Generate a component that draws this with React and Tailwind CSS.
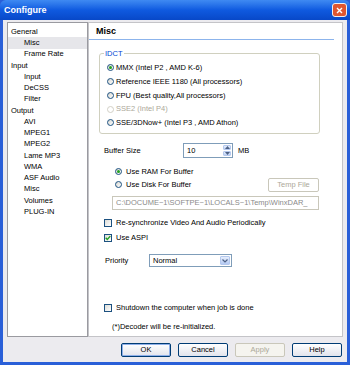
import React from 'react';

const Radio = ({ checked, disabled }) => (
  <span className={`w-[7px] h-[7px] rounded-full border shrink-0 flex items-center justify-center ${disabled ? 'border-[#d2d0c6] bg-white' : 'border-[#1c5180] bg-gradient-to-br from-[#d6d6d0] to-white'}`}>
    {checked && <span className="w-[3px] h-[3px] rounded-full bg-[#21a121]" />}
  </span>
);

const Check = ({ checked }) => (
  <span className="w-[8px] h-[8px] border border-[#1c5180] bg-gradient-to-br from-[#dcdcd7] to-white flex items-center justify-center shrink-0">
    {checked && (
      <svg width="6" height="6" viewBox="0 0 6 6">
        <path d="M0.7 2.8 L2.3 4.5 L5.3 1.1" stroke="#21a121" strokeWidth="1.4" fill="none" />
      </svg>
    )}
  </span>
);

const Btn = ({ children, disabled, def }) => (
  <button
    className={`w-[50px] h-[14px] rounded-[2px] border text-[7.5px] leading-none flex items-center justify-center ${
      disabled
        ? 'border-[#c9c7ba] text-[#aca899] bg-[#f5f4ef]'
        : 'border-[#003c74] text-black bg-gradient-to-b from-white to-[#e2e4ec]'
    } ${def ? 'shadow-[inset_0_0_0_1px_#8fb0ea]' : ''}`}
  >
    {children}
  </button>
);

const tree = [
  ['General', 0],
  ['Misc', 1, true],
  ['Frame Rate', 1],
  ['Input', 0],
  ['Input', 1],
  ['DeCSS', 1],
  ['Filter', 1],
  ['Output', 0],
  ['AVI', 1],
  ['MPEG1', 1],
  ['MPEG2', 1],
  ['Lame MP3', 1],
  ['WMA', 1],
  ['ASF Audio', 1],
  ['Misc', 1],
  ['Volumes', 1],
  ['PLUG-IN', 1],
];

const idct = [
  ['MMX (Intel P2 , AMD K-6)', true, false],
  ['Reference IEEE 1180 (All processors)', false, false],
  ['FPU (Best quality,All processors)', false, false],
  ['SSE2 (Intel P4)', false, true],
  ['SSE/3DNow+ (Intel P3 , AMD Athon)', false, false],
];

export default function App() {
  return (
    <div className="w-[350px] h-[365px] flex flex-col bg-[#2a5fd8] font-['Liberation_Sans',Arial,sans-serif] text-black">
      {/* title bar */}
      <div className="h-[20px] shrink-0 flex items-center justify-between pl-[4px] pr-[3px] rounded-t-[6px] bg-gradient-to-b from-[#3f8af2] via-[#0f5ae0] to-[#0848c8]">
        <span className="text-white text-[9px] font-bold leading-none">Configure</span>
        <div className="w-[15px] h-[14px] shrink-0 rounded-[3px] border border-[#f0f0f0] bg-[#e0562f] flex items-center justify-center">
          <svg width="7" height="7" viewBox="0 0 7 7">
            <path d="M1 1 L6 6 M6 1 L1 6" stroke="white" strokeWidth="1.4" />
          </svg>
        </div>
      </div>

      {/* body */}
      <div className="flex-1 mx-[3px] mb-[3px] bg-[#ecebef] flex flex-col pt-[2px] px-[4px]">
        <div className="h-[315px] flex">
          {/* tree */}
          <div className="w-[81px] border border-[#9a9aa0] bg-white pt-[3px] text-[7.5px] leading-none">
            {tree.map(([label, level, sel], i) => (
              <div
                key={i}
                className={`h-[11.25px] flex items-center ${level ? 'pl-[16px]' : 'pl-[3px]'} ${sel ? 'bg-[#e6e6ea]' : ''}`}
              >
                {label}
              </div>
            ))}
          </div>

          {/* settings panel */}
          <div className="flex-1 border border-[#c4c4c8] bg-white flex flex-col text-[7.5px] leading-none">
            <div className="h-[17px] shrink-0 flex items-center pl-[7px] mr-[8px] border-b border-[#8cb4ec] text-[9px] font-bold">
              Misc
            </div>

            <fieldset className="ml-[10px] w-[221px] mt-[9px] border border-[#d0d0bf] rounded-[3px] pb-[3px]">
              <legend className="ml-[4px] px-[1px] text-[#0046d5] leading-[9px]">IDCT</legend>
              <div className="pt-[3px] pl-[7px]">
                {idct.map(([label, checked, disabled], i) => (
                  <div key={i} className={`h-[13.75px] flex items-center gap-[2px] ${disabled ? 'text-[#aca899]' : ''}`}>
                    <Radio checked={checked} disabled={disabled} />
                    <span>{label}</span>
                  </div>
                ))}
              </div>
            </fieldset>

            {/* buffer size */}
            <div className="mt-[9px] h-[15px] flex items-center pl-[15px]">
              <span className="w-[79px]">Buffer Size</span>
              <div className="w-[50px] h-[15px] border border-[#7f9db9] flex items-center">
                <span className="flex-1 pl-[3px]">10</span>
                <div className="w-[10px] h-full flex flex-col p-[1px] gap-[1px]">
                  <span className="flex-1 rounded-[1px] bg-gradient-to-b from-[#e6eefc] to-[#bcd0f4] border border-[#b4c8ee] flex items-center justify-center">
                    <svg width="5" height="3" viewBox="0 0 5 3"><path d="M0 3 L2.5 0 L5 3 Z" fill="#4d6185" /></svg>
                  </span>
                  <span className="flex-1 rounded-[1px] bg-gradient-to-b from-[#e6eefc] to-[#bcd0f4] border border-[#b4c8ee] flex items-center justify-center">
                    <svg width="5" height="3" viewBox="0 0 5 3"><path d="M0 0 L2.5 3 L5 0 Z" fill="#4d6185" /></svg>
                  </span>
                </div>
              </div>
              <span className="ml-[5px]">MB</span>
            </div>

            <div className="mt-[7px] h-[13px] flex items-center gap-[4px] pl-[26px]">
              <Radio checked />
              <span>Use RAM For Buffer</span>
            </div>
            <div className="h-[14px] flex items-center justify-between pl-[26px] mr-[23px]">
              <div className="flex items-center gap-[4px]">
                <Radio />
                <span>Use Disk For Buffer</span>
              </div>
              <div className="w-[51px] h-[14px] border border-[#c9c7ba] rounded-[2px] text-[#aca899] flex items-center justify-center">
                Temp File
              </div>
            </div>
            <div className="mt-[4px] ml-[23px] mr-[23px] h-[14px] border border-[#c9c7ba] text-[#8a8a8a] flex items-center pl-[3px] overflow-hidden whitespace-nowrap">
              C:\DOCUME~1\SOFTPE~1\LOCALS~1\Temp\WinxDAR_
            </div>

            <div className="mt-[6px] h-[14px] flex items-center gap-[4px] pl-[15px]">
              <Check />
              <span>Re-synchronize Video And Audio Periodically</span>
            </div>
            <div className="mt-[1px] h-[14px] flex items-center gap-[4px] pl-[15px]">
              <Check checked />
              <span>Use ASPI</span>
            </div>

            <div className="mt-[9px] h-[14px] flex items-center pl-[16px]">
              <span className="w-[44px]">Priority</span>
              <div className="w-[83px] h-[13px] border border-[#7f9db9] flex items-center">
                <span className="flex-1 pl-[3px]">Normal</span>
                <span className="w-[12px] h-full p-[1px]">
                  <span className="w-full h-full rounded-[1px] bg-gradient-to-b from-[#e6eefc] to-[#b4c9f2] border border-[#b4c8ee] flex items-center justify-center">
                    <svg width="6" height="4" viewBox="0 0 6 4"><path d="M0.5 0.5 L3 3 L5.5 0.5" stroke="#4d6185" strokeWidth="1.2" fill="none" /></svg>
                  </span>
                </span>
              </div>
            </div>

            <div className="mt-[33px] h-[14px] flex items-center gap-[4px] pl-[15px]">
              <Check />
              <span>Shutdown the computer when job is done</span>
            </div>
            <div className="mt-[6px] h-[12px] flex items-center pl-[23px]">
              (*)Decoder will be re-initialized.
            </div>
          </div>
        </div>

        {/* buttons */}
        <div className="mt-[6px] flex justify-end gap-[7px] pr-[1px]">
          <Btn def>OK</Btn>
          <Btn>Cancel</Btn>
          <Btn disabled>Apply</Btn>
          <Btn>Help</Btn>
        </div>
      </div>
    </div>
  );
}
